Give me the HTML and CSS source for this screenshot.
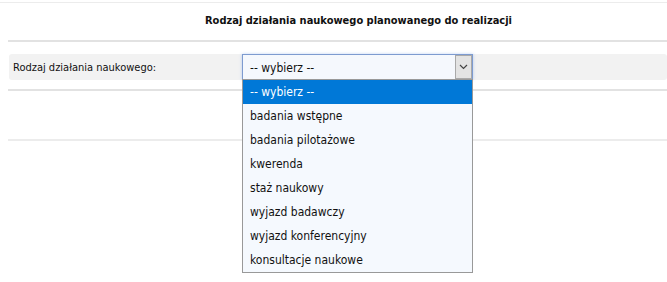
FILE: index.html
```html
<!DOCTYPE html>
<html lang="pl">
<head>
    <meta charset="UTF-8">
    <title>Rodzaj działania naukowego</title>
    <link rel="stylesheet" href="styles.css">
</head>
<body>
    <div class="topline"></div>
    <div class="form">
        <h2 class="form-title">Rodzaj działania naukowego planowanego do realizacji</h2>

        <div class="field-wrap">
            <div class="field">
                <label class="field-label">Rodzaj działania naukowego:</label>
                <div class="select">
                    <span class="select-value">-- wybierz --</span>
                    <span class="select-arrow">
                        <svg width="9" height="6" viewBox="0 0 9 6"><path d="M1 1 L4.5 4.5 L8 1" fill="none" stroke="#444" stroke-width="1.2"/></svg>
                    </span>
                    <ul class="select-list">
                        <li class="selected">-- wybierz --</li>
                        <li>badania wstępne</li>
                        <li>badania pilotażowe</li>
                        <li>kwerenda</li>
                        <li>staż naukowy</li>
                        <li>wyjazd badawczy</li>
                        <li>wyjazd konferencyjny</li>
                        <li>konsultacje naukowe</li>
                    </ul>
                </div>
            </div>
        </div>

        <div class="form-footer"></div>
    </div>
</body>
</html>
```

FILE: styles.css
```css
* {
    margin: 0;
    padding: 0;
    box-sizing: border-box;
}

html, body {
    min-height: 282px;
}

body {
    font-family: "DejaVu Sans Condensed", "DejaVu Sans", sans-serif;
    font-size: 11px;
    color: #111;
    background: #fff;
}

.topline {
    height: 3px;
    border-bottom: 1px solid #ececec;
}

.form {
    margin-left: 8px;
}

.form-title {
    font-size: 11px;
    font-weight: bold;
    text-align: center;
    padding-left: 42px;
    height: 39px;
    line-height: 35px;
    border-bottom: 2px solid #e2e2e2;
}

.field-wrap {
    padding-top: 12px;
    height: 49px;
    border-bottom: 2px solid #e2e2e2;
}

.field {
    display: flex;
    align-items: center;
    height: 26px;
    margin-left: 1px;
    background: #f2f2f2;
    border-radius: 3px;
}

.field-label {
    width: 233px;
    padding-left: 4px;
    padding-top: 1px;
}

.select {
    position: relative;
    width: 231px;
    height: 26px;
    display: flex;
    align-items: center;
    font-size: 12px;
    background: #f5f8fd;
    border: 1px solid #7d9bd0;
    box-shadow: 0 0 3px rgba(100, 150, 230, 0.4);
}

.select-value {
    flex: 1;
    padding-left: 7px;
    padding-top: 1px;
}

.select-arrow {
    width: 17px;
    height: 24px;
    display: flex;
    align-items: center;
    justify-content: center;
    background: #e3e3e3;
    border: 1px solid #a9a9a9;
}

.select-list {
    position: absolute;
    left: -1px;
    top: 24px;
    width: 231px;
    list-style: none;
    background: #f5f9fe;
    border: 1px solid #999;
    z-index: 2;
}

.select-list li {
    height: 24px;
    line-height: 25px;
    padding-left: 7px;
}

.select-list li.selected {
    background: #0078d7;
    color: #fff;
}

.form-footer {
    height: 50px;
    border-bottom: 2px solid #ececec;
}
```
